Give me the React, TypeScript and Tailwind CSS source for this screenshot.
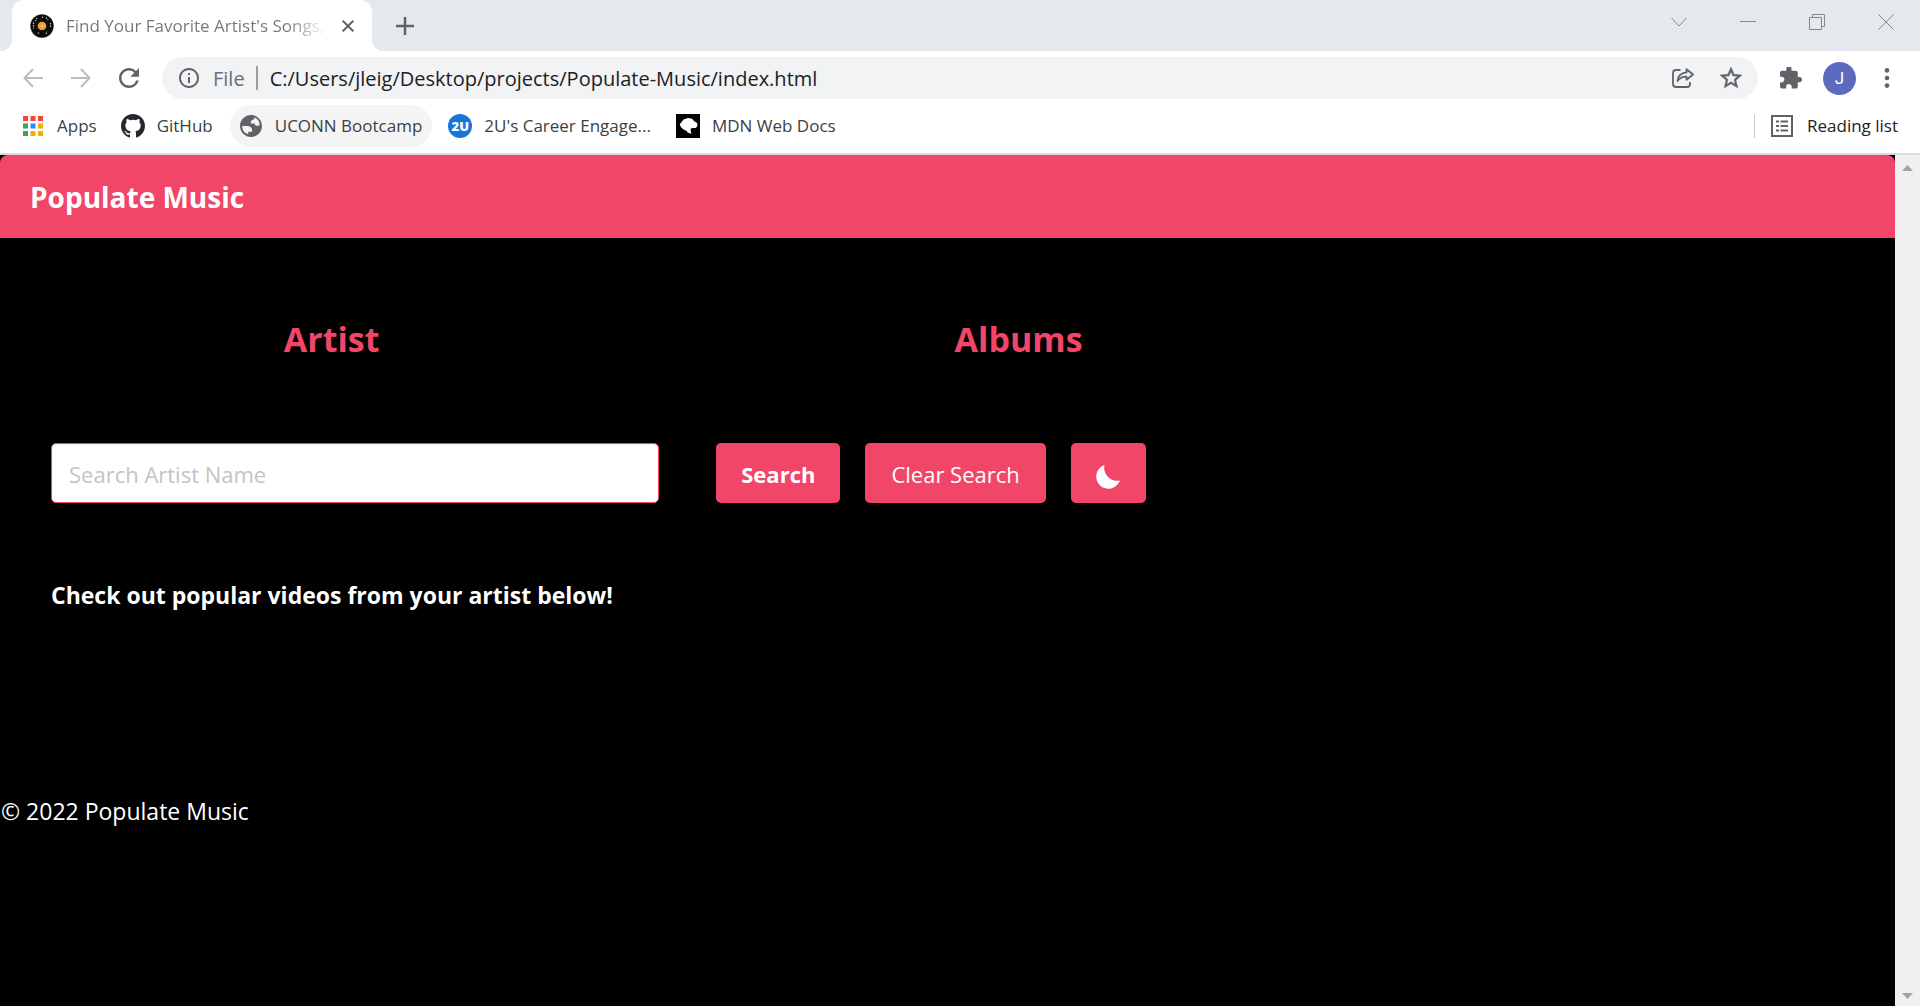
import type { ReactNode } from "react";

const bookmarkBase =
  "flex h-[42px] items-center gap-3 rounded-full text-[17px] leading-6 whitespace-nowrap text-[#3c4043]";

function Vinyl() {
  return (
    <svg viewBox="0 0 24 24" className="size-6 shrink-0" aria-hidden="true">
      <circle cx="12" cy="12" r="12" fill="#c9b48c" />
      <circle cx="12" cy="12" r="11.5" fill="#0b0b0b" />
      <path d="M3.5 8.5v6M7 4l-1.5 3M12.500 2.500v2.500M16 3.5l2 2.5M20.5 9v5M8 18.5l1.5 2M16 20l1-2.5" stroke="#c3c7ca" strokeWidth="1.2" strokeDasharray="1.5 1" fill="none" />
      <circle cx="12" cy="12" r="4.3" fill="#f0a030" />
      <circle cx="12" cy="12" r="1.3" fill="#c8cdd0" />
    </svg>
  );
}

function AppsGrid() {
  const colors = ["#f44336", "#f44336", "#f44336", "#34a853", "#1e90ff", "#f9ab00", "#34a853", "#f9ab00", "#f9ab00"];
  return (
    <svg viewBox="0 0 20 20" className="size-5" aria-hidden="true">
      {colors.map((color, i) => (
        <rect key={i} x={(i % 3) * 7.5} y={Math.floor(i / 3) * 7.5} width="5" height="5" fill={color} />
      ))}
    </svg>
  );
}

function GitHubMark() {
  return (
    <svg viewBox="0 0 16 16" className="size-6" fill="#24292f" aria-hidden="true">
      <path d="M8 0C3.58 0 0 3.58 0 8c0 3.54 2.29 6.53 5.47 7.59.4.07.55-.17.55-.38 0-.19-.01-.82-.01-1.49-2.01.37-2.53-.49-2.69-.94-.09-.23-.48-.94-.82-1.13-.28-.15-.68-.52-.01-.53.63-.01 1.08.58 1.23.82.72 1.21 1.87.87 2.33.66.07-.52.28-.87.51-1.07-1.78-.2-3.64-.89-3.64-3.95 0-.87.31-1.59.82-2.15-.08-.2-.36-1.02.08-2.12 0 0 .67-.21 2.2.82a7.6 7.6 0 0 1 4 0c1.53-1.04 2.2-.82 2.2-.82.44 1.1.16 1.92.08 2.12.51.56.82 1.27.82 2.15 0 3.07-1.87 3.75-3.65 3.95.29.25.54.73.54 1.48 0 1.07-.01 1.93-.01 2.2 0 .21.15.46.55.38A8.01 8.01 0 0 0 16 8c0-4.42-3.58-8-8-8z" />
    </svg>
  );
}

function Globe() {
  return (
    <svg viewBox="2 2 20 20" className="size-[22px]" fill="#5f6368" aria-hidden="true">
      <path d="M12 2C6.48 2 2 6.48 2 12s4.48 10 10 10 10-4.480 10-10S17.520 2 12 2zM4 12h4.400c3.407.022 4.922 1.730 4.543 5.127H9.488v2.470a8.004 8.004 0 0 1-5.443-6.750L4 12zm15.890-1.400c-.35.790-.93 1.190-1.750 1.190-1.700.1-2.700-.6-3.020-2.090h-3.400c-.1-2.300.9-3.500 3-3.500 0-.9.2-1.500.7-1.900a8 8 0 0 1 4.470 6.300z" />
    </svg>
  );
}

function TwoU() {
  return (
    <span className="flex size-6 items-center justify-center rounded-full bg-[#1976d8] text-[13px] leading-none font-extrabold text-white" aria-hidden="true">
      2U
    </span>
  );
}

function MdnMark() {
  return (
    <svg viewBox="0 0 24 24" className="size-6" aria-hidden="true">
      <rect width="24" height="24" />
      <path d="M3.700 10.500L5.500 8 7.500 5.500 12 4l4 .8 2 2.200 3.300 2.200v3l-1.600 1.800-3.700-.1-1.500 1.100.8 4.700-3.800-1.200-.7-1.500-3.300-1.500L5 13.200z" fill="#fff" />
    </svg>
  );
}

function ReadingList() {
  return (
    <svg viewBox="0 0 22 22" className="size-[22px]" fill="none" stroke="#5f6368" strokeWidth="2" aria-hidden="true">
      <path d="M1 1h20v20H1zM5 6.500h3M5 11h3M5 15.500h3M9.500 6.500H17M9.500 11H17M9.500 15.500H17" />
    </svg>
  );
}

function IconButton({ label, className = "", children }: { label: string; className?: string; children: ReactNode }) {
  return (
    <button type="button" aria-label={label} className={`flex shrink-0 items-center justify-center text-[#5f6368] ${className}`}>
      {children}
    </button>
  );
}

function TabStrip() {
  return (
    <div className="flex h-[51px] items-end justify-between bg-[#e5e9ec]">
      <div className="flex h-full items-end">
        <div className="h-3 w-3 bg-white">
          <div className="size-full rounded-br-xl bg-[#e5e9ec]" />
        </div>
        <div className="flex h-full w-[360px] items-center rounded-t-xl bg-white pr-[14px] pl-[18px]">
          <Vinyl />
          <span className="ml-3 flex-1 overflow-hidden bg-linear-to-r from-[#73777b] from-85% to-white bg-clip-text text-[17px] leading-6 whitespace-nowrap text-transparent">
            Find Your Favorite Artist's Songs,
          </span>
          <IconButton label="Close tab" className="ml-3 size-5">
            <svg viewBox="0 0 12 12" className="size-3" stroke="currentColor" strokeWidth="2">
              <path d="M.7.7l10.600 10.600M11.300.7L.7 11.300" />
            </svg>
          </IconButton>
        </div>
        <div className="h-3 w-3 bg-white">
          <div className="size-full rounded-bl-xl bg-[#e5e9ec]" />
        </div>
        <IconButton label="New tab" className="h-full w-[42px]">
          <svg viewBox="0 0 18 18" className="size-[18px]" stroke="currentColor" strokeWidth="2.500">
            <path d="M9 0v18M0 9h18" />
          </svg>
        </IconButton>
      </div>
      <div className="flex h-full pb-2">
        <IconButton label="Search tabs" className="w-[69px]">
          <svg viewBox="0 0 16 16" className="size-4" fill="none" stroke="#85898c">
            <path d="M.5 4L8 12l7.500-8" />
          </svg>
        </IconButton>
        <IconButton label="Minimize" className="w-[69px]">
          <svg viewBox="0 0 16 16" className="size-4" stroke="#85898c">
            <path d="M0 7.500h16" />
          </svg>
        </IconButton>
        <IconButton label="Restore" className="w-[69px]">
          <svg viewBox="0 0 16 16" className="size-4" fill="none" stroke="#85898c">
            <path d="M.5 3.500h12v12H.5zM3.500 3.500v-3h12v12h-3" />
          </svg>
        </IconButton>
        <IconButton label="Close window" className="w-[69px]">
          <svg viewBox="0 0 16 16" className="size-4" stroke="#85898c">
            <path d="M.5.5l15 15M15.500.5l-15 15" />
          </svg>
        </IconButton>
      </div>
    </div>
  );
}

function Toolbar() {
  return (
    <div className="flex h-[54px] items-center pt-[6px] pb-[6px] pl-[18px]">
      <IconButton label="Back" className="w-[30px]">
        <svg viewBox="0 0 20 20" className="size-5" fill="none" stroke="#babcbe" strokeWidth="2">
          <path d="M20 10H1.500M10 1L1.500 10l8.500 9" />
        </svg>
      </IconButton>
      <IconButton label="Forward" className="ml-[18px] w-[30px]">
        <svg viewBox="0 0 20 20" className="size-5" fill="none" stroke="#babcbe" strokeWidth="2">
          <path d="M0 10h18.500M10 1l8.500 9L10 19" />
        </svg>
      </IconButton>
      <IconButton label="Reload" className="ml-[18px] w-[30px]">
        <svg viewBox="4 4 16 16" className="size-5" fill="currentColor">
          <path d="M17.650 6.350A7.958 7.958 0 0 0 12 4c-4.420 0-7.990 3.580-7.990 8s3.570 8 7.990 8c3.730 0 6.840-2.550 7.730-6h-2.080A5.990 5.990 0 0 1 12 18c-3.310 0-6-2.690-6-6s2.690-6 6-6c1.660 0 3.140.69 4.220 1.780L13 11h7V4l-2.350 2.350z" />
        </svg>
      </IconButton>
      <div className="ml-[18px] flex h-[42px] flex-1 items-center rounded-full bg-[#f1f3f4] pr-[15px] pl-[17px]">
        <svg viewBox="2 2 20 20" className="size-5 shrink-0" fill="#5f6368" aria-hidden="true">
          <path d="M11 17h2v-6h-2v6zm1-15C6.480 2 2 6.480 2 12s4.480 10 10 10 10-4.480 10-10S17.520 2 12 2zm0 18c-4.410 0-8-3.590-8-8s3.590-8 8-8 8 3.590 8 8-3.590 8-8 8zM11 9h2V7h-2v2z" />
        </svg>
        <span className="ml-[14px] pt-[2px] text-[20px] leading-7 text-[#6b6f73]">File</span>
        <span className="ml-[11px] h-6 w-[2px] bg-[#9a9da1]" />
        <input
          type="text"
          aria-label="Address"
          defaultValue="C:/Users/jleig/Desktop/projects/Populate-Music/index.html"
          className="ml-3 min-w-0 flex-1 bg-transparent pt-[2px] text-[20px] leading-7 text-[#202124] outline-none"
        />
        <IconButton label="Share" className="size-6">
          <svg viewBox="0 0 22 20" className="h-5 w-[22px]" fill="none" stroke="currentColor" strokeWidth="1.800" strokeLinejoin="round">
            <path d="M8.500 2H4a3 3 0 0 0-3 3v11a3 3 0 0 0 3 3h11a3 3 0 0 0 3-3v-2" />
            <path d="M14.500 1.200l6.500 5.300-6.500 5.300V8.700c-4-.2-6.500 1-9 4.300C6 8 9 4.900 14.500 4.400z" />
          </svg>
        </IconButton>
        <IconButton label="Bookmark this page" className="ml-6 size-6">
          <svg viewBox="2 2 20 20" className="size-[22px]" fill="currentColor">
            <path d="M22 9.240l-7.190-.62L12 2 9.190 8.630 2 9.240l5.460 4.730L5.820 21 12 17.270 18.180 21l-1.630-7.030L22 9.240zM12 15.400l-3.760 2.270 1-4.280-3.320-2.880 4.380-.38L12 6.100l1.710 4.040 4.380.38-3.320 2.880 1 4.280L12 15.400z" stroke="currentColor" strokeWidth=".4" />
          </svg>
        </IconButton>
      </div>
      <IconButton label="Extensions" className="ml-[21px] size-6">
        <svg viewBox="2 1.500 21 21" className="size-[22px]" fill="currentColor">
          <path d="M20.500 11H19V7c0-1.100-.9-2-2-2h-4V3.500a2.500 2.500 0 0 0-5 0V5H4c-1.100 0-1.990.9-1.990 2v3.800H3.500c1.490 0 2.700 1.210 2.700 2.700s-1.210 2.700-2.700 2.700H2V20c0 1.100.9 2 2 2h3.800v-1.500c0-1.490 1.210-2.700 2.700-2.700s2.700 1.210 2.700 2.700V22H17c1.100 0 2-.9 2-2v-4h1.500a2.500 2.500 0 0 0 0-5z" />
        </svg>
      </IconButton>
      <button type="button" aria-label="Profile" className="ml-5 size-[33px] shrink-0 rounded-full bg-[#5c6bc0] font-['Roboto',sans-serif] text-[17px] leading-6 text-white">
        J
      </button>
      <IconButton label="Menu" className="ml-[19px] mr-[21px] size-6">
        <svg viewBox="0 0 6 20" className="h-5 w-[6px]" fill="currentColor">
          <circle cx="3" cy="2.400" r="2.300" />
          <circle cx="3" cy="10" r="2.300" />
          <circle cx="3" cy="17.600" r="2.300" />
        </svg>
      </IconButton>
    </div>
  );
}

function BookmarksBar() {
  return (
    <nav aria-label="Bookmarks" className="flex h-[50px] items-start justify-between border-b-2 border-[#d9dbdd] pr-[22px] pl-[11px]">
      <div className="flex">
        <a href="#apps" className={`${bookmarkBase} px-3`}>
          <AppsGrid />
          <span className="ml-[2px]">Apps</span>
        </a>
        <a href="#github" className={`${bookmarkBase} px-3`}>
          <GitHubMark />
          GitHub
        </a>
        <a href="#uconn" className={`${bookmarkBase} ml-[5px] bg-[#f4f4f4] px-[10px]`}>
          <Globe />
          <span className="ml-px">UCONN Bootcamp</span>
        </a>
        <a href="#2u" className={`${bookmarkBase} ml-[5px] px-[11px]`}>
          <TwoU />
          2U's Career Engage...
        </a>
        <a href="#mdn" className={`${bookmarkBase} ml-[2px] px-3`}>
          <MdnMark />
          MDN Web Docs
        </a>
      </div>
      <div className="flex items-center">
        <span className="h-6 w-px bg-[#c9cbce]" />
        <button type="button" className="ml-4 flex h-[42px] items-center gap-[14px] text-[17px] leading-6 text-[#202124]">
          <ReadingList />
          Reading list
        </button>
      </div>
    </nav>
  );
}

function Page() {
  return (
    <div className="flex-1 bg-black text-white">
      <header className="rounded-t-lg bg-[#f14668] pt-[22px] pr-[30px] pb-5 pl-[30px]">
        <h1 className="text-[28px] leading-[41px] font-bold">Populate Music</h1>
      </header>
      <main className="grid grid-cols-[35%_37.5%_1fr] pt-20">
        <h2 className="text-center text-[34px] leading-[42px] font-bold text-[#f14668]">Artist</h2>
        <h2 className="text-center text-[34px] leading-[42px] font-bold text-[#f14668]">Albums</h2>
        <div />
        <div className="pt-[83px] pr-1 pl-[51px]">
          <input
            type="text"
            aria-label="Search Artist Name"
            placeholder="Search Artist Name"
            className="h-[60px] w-full rounded-[5px] border border-[#f14668] bg-white px-[17px] pt-[2px] text-[22px] text-gray-800 shadow-[inset_0_1px_2px_rgba(10,10,10,0.05)] placeholder:text-[#c4c4c4] focus:outline-none"
          />
        </div>
        <div className="flex gap-[25px] pt-[83px] pl-[53px]">
          <button type="button" className="h-[60px] rounded-[5px] bg-[#f14668] px-[25px] pt-[2px] text-[22px] font-bold">
            Search
          </button>
          <button type="button" className="h-[60px] rounded-[5px] bg-[#f14668] px-[26px] pt-[2px] text-[22px] whitespace-nowrap">
            Clear Search
          </button>
          <button type="button" aria-label="Toggle dark mode" className="flex h-[60px] w-[75px] items-center justify-center rounded-[5px] bg-[#f14668] pt-2">
            <svg viewBox="0 0 24 24" className="size-6" fill="currentColor">
              <path d="M8.500 0A13 13 0 0 0 24 15.500 12.200 12.200 0 1 1 8.500 0z" />
            </svg>
          </button>
        </div>
      </main>
      <p className="mt-[74px] px-[51px] text-[23px] leading-9 font-bold">Check out popular videos from your artist below!</p>
      <footer className="mt-[180px] px-px text-[23px] leading-9">© 2022 Populate Music</footer>
    </div>
  );
}

function Scrollbar() {
  return (
    <div className="flex w-[25px] flex-col items-center justify-between bg-[#f0f0f0] py-[7px]" aria-hidden="true">
      <svg viewBox="0 0 11 6" className="mt-[3px] h-[6px] w-[11px]" fill="#a3a3a3">
        <path d="M0 6L5.500 0 11 6z" />
      </svg>
      <svg viewBox="0 0 11 6" className="h-[6px] w-[11px]" fill="#a3a3a3">
        <path d="M0 0l5.500 6L11 0z" />
      </svg>
    </div>
  );
}

export default function App() {
  return (
    <div className="flex min-h-screen flex-col bg-white font-['Open_Sans','Noto_Sans',sans-serif]">
      <TabStrip />
      <Toolbar />
      <BookmarksBar />
      <div className="flex flex-1">
        <Page />
        <Scrollbar />
      </div>
    </div>
  );
}
